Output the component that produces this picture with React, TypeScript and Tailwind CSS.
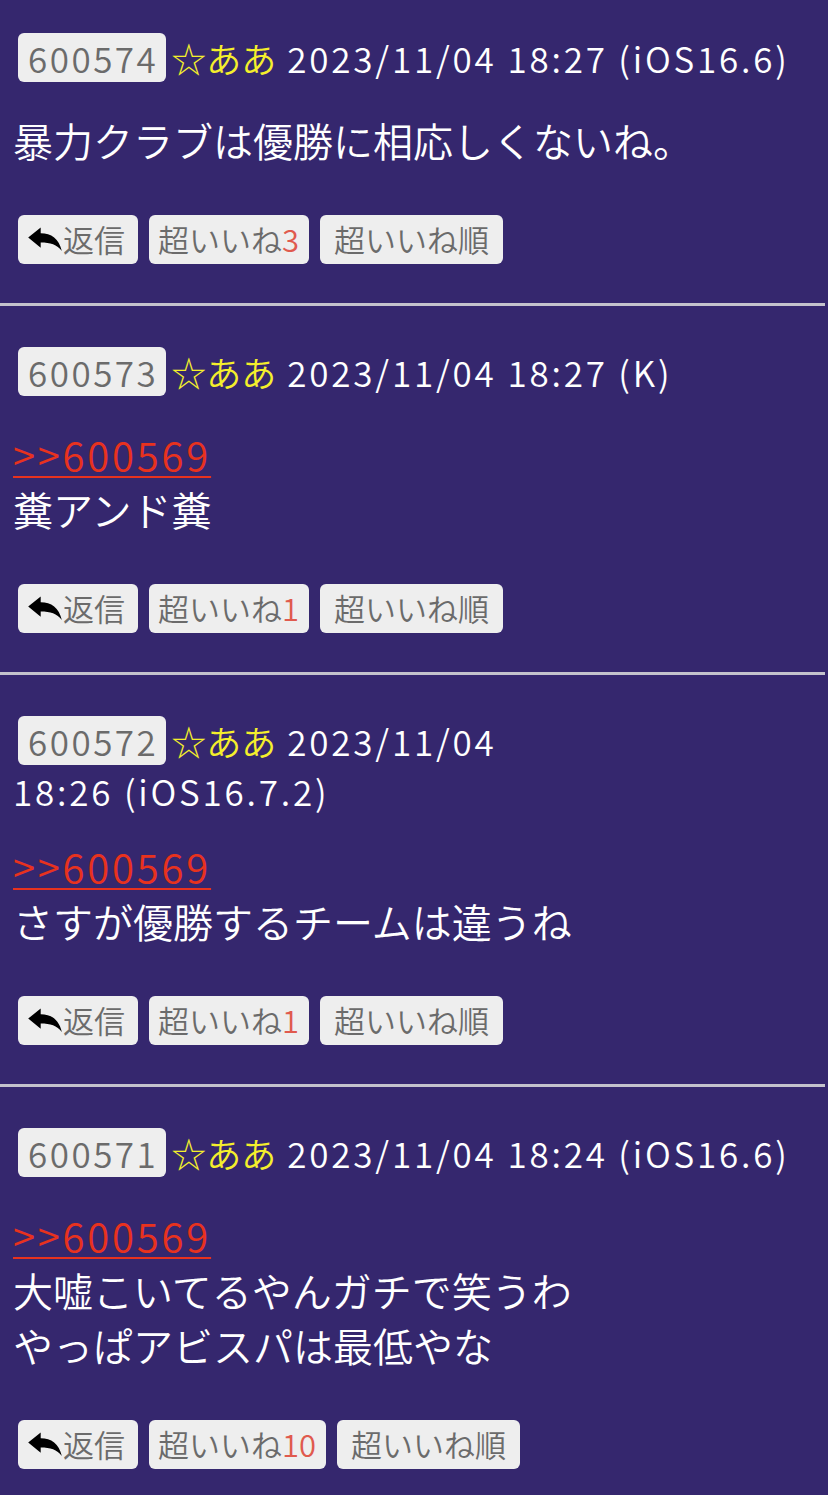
import React from "react";

type Post = {
  no: string;
  date: string;
  time: string;
  anchor?: string;
  lines: string[];
  likes: number;
};

const posts: Post[] = [
  { no: "600574", date: "2023/11/04", time: "18:27 (iOS16.6)", lines: ["暴力クラブは優勝に相応しくないね。"], likes: 3 },
  { no: "600573", date: "2023/11/04", time: "18:27 (K)", anchor: ">>600569", lines: ["糞アンド糞"], likes: 1 },
  { no: "600572", date: "2023/11/04", time: "18:26 (iOS16.7.2)", anchor: ">>600569", lines: ["さすが優勝するチームは違うね"], likes: 1 },
  { no: "600571", date: "2023/11/04", time: "18:24 (iOS16.6)", anchor: ">>600569", lines: ["大嘘こいてるやんガチで笑うわ", "やっぱアビスパは最低やな"], likes: 10 },
];

function ReplyIcon() {
  return (
    <svg width="35" height="25" viewBox="0 0 36 26" className="shrink-0">
      <path d="M0 11 L13 0.5 L13 6.5 C24 6.5 32 12 35 25 C30 18 23 16 13 16 L13 21.5 Z" fill="#000" />
    </svg>
  );
}

function PostView({ p, last }: { p: Post; last: boolean }) {
  return (
    <div>
      <div className="pl-[13px] pr-[20px]">
        <div className="flex flex-wrap items-center gap-x-[11px] gap-y-[9px] text-[35px] leading-[34px] text-white">
          <span className="ml-[5px] mr-[-6px] inline-block h-[49px] rounded-[6px] bg-[#eeeeee] pl-[10px] pr-[8px] leading-[49px] tracking-[2.5px] text-[#6b6b6b]">
            {p.no}
          </span>
          <span className="whitespace-nowrap text-[#f4ef2c]">☆ああ</span>
          <span className="whitespace-nowrap tracking-[2.8px]">{p.date}</span>
          <span className="whitespace-nowrap tracking-[2.8px]">{p.time}</span>
        </div>
        <div className="mt-[31px] text-[40px] leading-[55px] text-white">
          {p.anchor && (
            <div>
              <a className="tracking-[2.8px] text-[#e8321e] underline decoration-[2px] underline-offset-[5px]">{p.anchor}</a>
            </div>
          )}
          {p.lines.map((l, i) => (
            <div key={i}>{l}</div>
          ))}
        </div>
        <div className="mt-[47px] ml-[5px] flex gap-x-[11px] text-[31px] text-[#6b6b6b]">
          <div className="flex h-[49px] items-center rounded-[6px] bg-[#eeeeee] pl-[10px] pr-[13px]">
            <ReplyIcon />
            <span>返信</span>
          </div>
          <div className="flex h-[49px] items-center rounded-[6px] bg-[#eeeeee] pl-[9px] pr-[10px]">
            <span>超いいね</span>
            <span className="text-[#e05a4e]">{p.likes}</span>
          </div>
          <div className="flex h-[49px] items-center rounded-[6px] bg-[#eeeeee] px-[14px]">
            <span>超いいね順</span>
          </div>
        </div>
      </div>
      {!last && <div className="mt-[39px] mb-[41px] mr-[3px] h-[3px] bg-[#c4c2cc]" />}
    </div>
  );
}

export default function App() {
  return (
    <div className="min-h-screen bg-[#35276e] pt-[33px] pb-[25px] font-[350] font-['Noto_Sans_CJK_JP','Noto_Sans',sans-serif]">
      {posts.map((p, i) => (
        <PostView key={p.no} p={p} last={i === posts.length - 1} />
      ))}
    </div>
  );
}
